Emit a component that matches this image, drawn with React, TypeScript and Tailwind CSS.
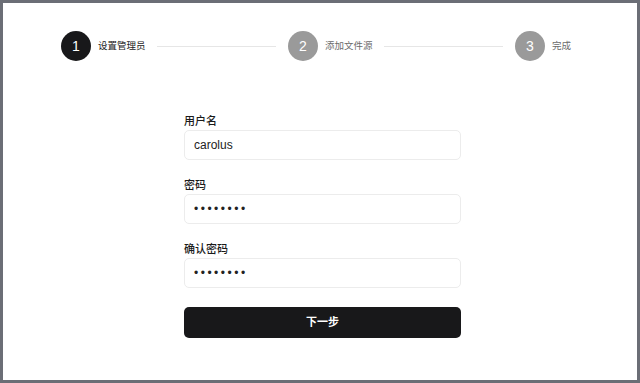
const FONT = "font-['Liberation_Sans','Noto_Sans_CJK_SC',sans-serif]";

const steps = [
  { n: 1, label: "设置管理员", active: true },
  { n: 2, label: "添加文件源", active: false },
  { n: 3, label: "完成", active: false },
];

function Stepper() {
  return (
    <div className="flex items-center pl-[58px] pr-[66px] pt-[28px]">
      {steps.map((s, i) => (
        <div key={s.n} className={`flex items-center ${i < steps.length - 1 ? "flex-1" : ""}`}>
          <div
            className={`flex h-[30px] w-[30px] shrink-0 items-center justify-center rounded-full text-[14px] text-white ${
              s.active ? "bg-[#18181a]" : "bg-[#9a9a9a]"
            }`}
          >
            {s.n}
          </div>
          <span className={`ml-[7px] text-[9.5px] ${s.active ? "text-[#1a1a1a]" : "text-[#6b6b6b]"}`}>{s.label}</span>
          {i < steps.length - 1 && <div className="ml-[11px] mr-[12px] h-px flex-1 bg-[#e6e6e6]" />}
        </div>
      ))}
    </div>
  );
}

function Field({ label, value, password }: { label: string; value: string; password?: boolean }) {
  return (
    <div className="flex flex-col">
      <label className="mb-[2px] text-[11px] leading-[14px] font-medium text-[#1a1a1a]">{label}</label>
      <input
        type={password ? "password" : "text"}
        readOnly
        value={value}
        className={`h-[30px] rounded-[5px] border border-[#ececec] bg-white px-[9px] text-[12px] text-[#222] outline-none ${
          password ? "tracking-[2.5px]" : ""
        }`}
      />
    </div>
  );
}

export default function App() {
  return (
    <div className={`h-screen w-full border-[3px] border-[#6b6e76] bg-white ${FONT}`}>
      <Stepper />
      <form className="ml-[181px] mt-[53px] flex w-[277px] flex-col gap-[18px]" onSubmit={(e) => e.preventDefault()}>
        <Field label="用户名" value="carolus" />
        <Field label="密码" value="password" password />
        <Field label="确认密码" value="password" password />
        <button type="submit" className="mt-px h-[31px] rounded-[5px] bg-[#18181a] text-[11px] font-semibold text-white">
          下一步
        </button>
      </form>
    </div>
  );
}
